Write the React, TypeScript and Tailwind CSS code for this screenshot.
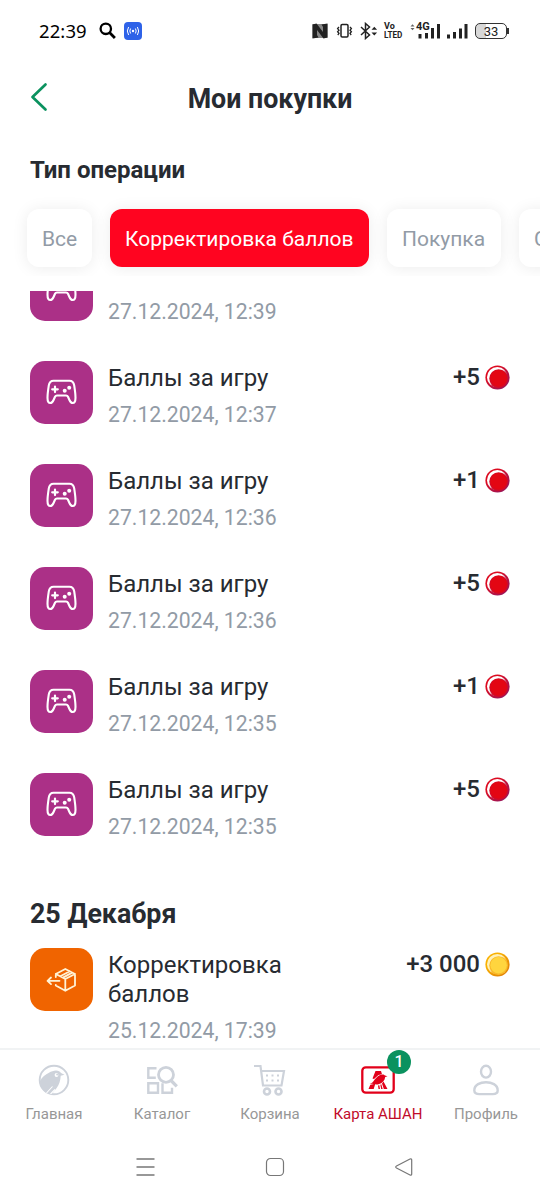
import type { ReactNode } from "react";

const chips = [
  { label: "Все", width: "w-[65px]", active: false },
  { label: "Корректировка баллов", width: "w-[259px]", active: true },
  { label: "Покупка", width: "w-[114px]", active: false },
  { label: "Списание", width: "w-[124px]", active: false },
];

const games = [
  { id: 1, date: "27.12.2024, 12:39", points: "+1" },
  { id: 2, date: "27.12.2024, 12:37", points: "+5" },
  { id: 3, date: "27.12.2024, 12:36", points: "+1" },
  { id: 4, date: "27.12.2024, 12:36", points: "+5" },
  { id: 5, date: "27.12.2024, 12:35", points: "+1" },
  { id: 6, date: "27.12.2024, 12:35", points: "+5" },
];

function StatusBar() {
  return (
    <div className="flex h-[62px] items-center pl-[39px] pr-[31px] text-black">
      <span className="w-[60px] font-['Noto_Sans'] text-[18.5px] tracking-[0.1px]">22:39</span>
      <svg className="-mt-px" width="17" height="17" viewBox="0 0 17 17" fill="none" stroke="currentColor" strokeWidth="2.3">
        <circle cx="6.8" cy="6.8" r="5.2" />
        <path d="M10.5 10.5l5.4 5.4" strokeWidth="2.8" />
      </svg>
      <div className="ml-2 flex h-[18px] w-[18px] items-center justify-center rounded-[4px] bg-[#2e62e8]">
        <svg width="14" height="10" viewBox="0 0 14 10" fill="none" stroke="white" strokeWidth="1">
          <circle cx="7" cy="5" r="1.2" fill="white" stroke="none" />
          <path d="M4.6 2.5q-1.6 2.5 0 5M9.4 2.5q1.6 2.5 0 5M2.6 1q-2.6 4 0 8M11.4 1q2.6 4 0 8" />
        </svg>
      </div>

      <div className="ml-auto flex h-[18px] items-center text-[#222]">
        {/* NFC */}
        <svg width="16" height="16" viewBox="0 0 16 16">
          <path d="M0.5 1.5l4-1L11 9V4L9.500 1.500l6-1v14l-4 1L5 7v5l1.500 2.500-6 1z" fill="currentColor" />
          <path d="M0.5 1h15v14h-15z" fill="currentColor" opacity="0.550" />
        </svg>
        {/* Vibration */}
        <svg className="ml-2" width="17" height="16" viewBox="0 0 17 16" fill="none" stroke="currentColor" strokeWidth="1.5">
          <rect x="5" y="1.5" width="7" height="12.5" rx="1.2" />
          <path d="M3 4L1.6 5.6 3 7.2 1.6 8.8 3 10.4 1.8 12M14 4l1.4 1.6L14 7.2l1.4 1.6L14 10.4l1.2 1.6" strokeWidth="1.3" />
        </svg>
        {/* Bluetooth */}
        <svg className="ml-[7px]" width="18" height="18" viewBox="0 0 18 18" fill="none" stroke="currentColor" strokeWidth="1.5">
          <path d="M1 5l8.5 8-4 3.5v-15l4 3.5L1 13" />
          <path d="M11.500 7.800L14.300 4.800l2.800 3zM11.500 10.500l2.800 3 2.800-3z" fill="currentColor" stroke="none" />
        </svg>
        <div className="ml-[6px] w-[22px] font-[Roboto] text-[9px] font-bold leading-[9px]">
          <div>Vo</div>
          <div className="origin-left scale-x-[0.900] whitespace-nowrap">LTED</div>
        </div>
        <div className="relative ml-[4px] h-[18px] w-[32px]">
          <svg width="32" height="18" viewBox="0 0 32 18" fill="currentColor">
            <path d="M0.500 4.500l2-2.200 2 2.200zM0.500 6l2 2.200 2-2.200z" opacity="0.700" />
            <path d="M8.500 12h3v4.500h-3zM15 11h3v5.500h-3zM21 6h3v10.500h-3zM27 2h3v14.500h-3z" />
          </svg>
          <span className="absolute left-[6px] top-0 font-[Roboto] text-[11px] font-bold leading-[10px]">4G</span>
        </div>
        <svg className="ml-[4px]" width="23" height="18" viewBox="0 0 23 18" fill="currentColor">
          <path d="M1 12.500h3v4H1zM7 10h3v6.500H7zM13 6.500h3v10h-3zM18.500 2h3v14.500h-3z" />
        </svg>
        <div className="ml-[6px] flex h-[16px] w-[32px] items-center justify-center rounded-[5px] border border-[#333] bg-[linear-gradient(90deg,#d8d8d8_33%,white_33%)] font-[Roboto] text-[13px] leading-none">
          33
        </div>
        <div className="h-[6px] w-[2px] bg-[#333]" />
      </div>
    </div>
  );
}

function GamepadIcon() {
  return (
    <svg width="31" height="26" viewBox="0 0 31 26" fill="none" stroke="white" strokeWidth="2.100" strokeLinejoin="round" strokeLinecap="round">
      <path d="M7.500 1.700h16c3.200 0 4.300 2 4.700 4.700.7 4.500 1.300 8.500 1.300 12.300 0 3.200-1.200 5.300-2.800 5.300-1.500 0-2.600-1.500-3.400-3.300l-1.300-2.900c-.4-.9-1-1.300-2-1.300h-9c-1 0-1.600.4-2 1.300l-1.300 2.900C6.900 22.500 5.800 24 4.300 24c-1.600 0-2.800-2.100-2.800-5.300 0-3.800.6-7.800 1.300-12.300.4-2.700 1.500-4.700 4.700-4.700z" />
      <path d="M9 7.500v5.600M6.200 10.300h5.600" strokeWidth="2.200" />
      <g fill="white" stroke="none">
        <circle cx="18.700" cy="11.700" r="2" />
        <circle cx="23.200" cy="8.700" r="2" />
      </g>
    </svg>
  );
}

function BoxIcon() {
  return (
    <svg width="31" height="26" viewBox="0 0 31 26" fill="none" stroke="#fff3d6" strokeWidth="1.800" strokeLinejoin="round" strokeLinecap="round">
      <path d="M9.800 10V7L19.300 2 29 7v11.500l-9.700 5.300-9.500-5.300v-.7M9.800 7l9.500 5L29 7M19.300 12v11.500M14.300 9.300l9.500-5M17 10.600l9.200-5" />
      <path d="M5 10.500L1.500 13.800 5 17.100M2 13.800h11.500" />
    </svg>
  );
}

function Coin({ gold = false }: { gold?: boolean }) {
  const id = gold ? "coin-gold" : "coin-red";
  const ring = `${id}-ring`;
  return (
    <svg width="25" height="25" viewBox="0 0 25 25">
      <defs>
        <linearGradient id={id} x1="0" y1="0" x2="1" y2="1">
          <stop offset="0.3" stopColor={gold ? "#f9b000" : "#dc0a20"} />
          <stop offset="0.95" stopColor={gold ? "#dc7a08" : "#8d1a66"} />
        </linearGradient>
        <linearGradient id={ring} x1="0" y1="0" x2="1" y2="1">
          <stop offset="0.420" stopColor={gold ? "#fff1b8" : "#fff"} />
          <stop offset="0.680" stopColor={gold ? "#f6a81c" : "#c4143c"} />
        </linearGradient>
      </defs>
      <circle cx="12.500" cy="12.500" r="12.100" fill={`url(#${id})`} />
      <circle cx="12.300" cy="12.300" r="10.300" fill={`url(#${ring})`} />
      <circle cx="13.600" cy="13.600" r="9.300" fill={gold ? "#f9b92a" : "#d40a25"} />
      <circle cx="13.600" cy="13.300" r="8.200" fill={gold ? "#ffd53e" : "#e30613"} />
    </svg>
  );
}

type RowProps = {
  icon: ReactNode;
  color: string;
  title: ReactNode;
  date: string;
  points: string;
  gold?: boolean;
};

function Row({ icon, color, title, date, points, gold }: RowProps) {
  return (
    <div className="flex min-h-[103px] items-start px-[30px]">
      <div className={`flex h-[63px] w-[63px] shrink-0 items-center justify-center rounded-[15px] ${color}`}>
        {icon}
      </div>
      <div className="ml-[15px] pt-[3px]">
        <div className="text-[24px] leading-[29px] text-[#272b31]">{title}</div>
        <div className="mt-[7px] text-[21.200px] leading-[29px] text-[#929ba6]">{date}</div>
      </div>
      <div className="ml-auto flex items-center gap-[5px] pt-[4px]">
        <span className="text-[24px] font-medium leading-[25px] text-[#272b31]">{points}</span>
        <Coin gold={gold} />
      </div>
    </div>
  );
}

function HomeIcon() {
  return (
    <svg width="32" height="32" viewBox="0 0 32 32">
      <circle cx="16" cy="16" r="14.300" fill="none" stroke="#cdd2da" strokeWidth="1.900" />
      <path d="M2 17c2-4 5.500-6.500 9-8.300 2.200-1.200 4.500-2.200 7-2.200 2.500 0 4 1.300 5 2.500l3.500 1.700-3.800 1c-.2 5-1.500 9-4.200 12.500L13.500 30.500C6 29 2 24 2 17z" fill="#cdd2da" />
      <path d="M14.500 22.500L8.500 29M17 25.500L12.500 30" stroke="white" strokeWidth="1.100" />
      <circle cx="18.500" cy="11" r="1.900" fill="white" />
      <circle cx="19.200" cy="10.500" r="1" fill="#cdd2da" />
    </svg>
  );
}

function CatalogIcon() {
  return (
    <svg width="32" height="30" viewBox="0 0 32 30" fill="none" stroke="#cdd2da" strokeWidth="2.400">
      <path d="M10.500 3.300H2.300v9.500h7.500M2.300 18.300h9.700v9.500H2.300zM16.500 18.300v9.500h9.500v-5" />
      <circle cx="20" cy="9.800" r="7.500" strokeWidth="2.800" />
      <path d="M25 15.500l5.800 5.800" strokeWidth="3.200" />
    </svg>
  );
}

function CartIcon() {
  return (
    <svg width="32" height="32" viewBox="0 0 32 32" fill="none" stroke="#cdd2da" strokeWidth="2.200">
      <path d="M0 2h6.500l2.500 19.500h18.500L30 7H7" />
      <circle cx="13" cy="27.500" r="3" strokeWidth="2.600" />
      <circle cx="24.500" cy="27.500" r="3" strokeWidth="2.600" />
      <path d="M12 11.500h2M17.500 11.500h2M23 11.500h2M12 16.500h2M17.500 16.500h2M23 16.500h2" />
    </svg>
  );
}

function CardIcon() {
  return (
    <svg width="34" height="28" viewBox="0 0 34 28">
      <rect x="1.300" y="1.300" width="31.400" height="25.400" rx="3.500" fill="white" stroke="#e2001a" strokeWidth="2.300" />
      <g fill="#e2001a">
        <path d="M14.500 5h5.500l1 3.200-3.500.8-4.500 4-1.500-.5zM7.500 23l1.800-4.200 5-1-1.600 5.200z" />
        <path d="M8.500 17.800c2.500-.5 3.500-1.800 5-4 2-2.800 4.500-5.200 8-5.400 1.200 0 2 .5 2.500 1.100l2.500.7-2.300.9c-.4 3.400-2.700 6.200-6.700 7.200-3.200.7-5.500-.8-9-.5z" />
        <path d="M22.500 15.500l4 7.500h-3.700l-1.800-5.500zM17 19.500l1.300-.3.700 3.800h-1.500zM19.300 18.700l1-.4 1.400 4.700h-1.500z" />
      </g>
    </svg>
  );
}

function ProfileIcon() {
  return (
    <svg width="28" height="32" viewBox="0 0 28 32" fill="none" stroke="#cdd2da" strokeWidth="2.400">
      <ellipse cx="14" cy="7.700" rx="5" ry="5.900" />
      <path d="M14 18.300c5.500 0 11.700 2.200 11.700 8.200 0 2.700-2 3.600-5 3.600H7.300c-3 0-5-.9-5-3.600 0-6 6.200-8.200 11.700-8.200z" />
    </svg>
  );
}

const tabs = [
  { label: "Главная", icon: <HomeIcon /> },
  { label: "Каталог", icon: <CatalogIcon /> },
  { label: "Корзина", icon: <CartIcon /> },
  { label: "Карта АШАН", icon: <CardIcon />, active: true, badge: 1 },
  { label: "Профиль", icon: <ProfileIcon /> },
];

export default function App() {
  return (
    <div className="flex h-[1200px] w-[540px] flex-col overflow-hidden bg-white font-[Roboto,'Noto_Sans',sans-serif]">
      <StatusBar />

      {/* Header */}
      <header className="grid h-[74px] grid-cols-[60px_1fr_60px] items-center">
        <svg className="ml-[30px] -mt-1" width="18" height="30" viewBox="0 0 18 30" fill="none" stroke="#0b925f" strokeWidth="2.700" strokeLinecap="round" strokeLinejoin="round">
          <path d="M15.500 2.500L2.500 15l13 12.500" />
        </svg>
        <h1 className="text-center text-[26.800px] font-bold text-[#272b31]">Мои покупки</h1>
      </header>

      <h2 className="h-[55px] pl-[30px] pt-5 text-[24px] font-bold leading-[28px] text-[#272b31]">Тип операции</h2>

      {/* Filters */}
      <div className="flex h-[85px] shrink-0 gap-[18px] overflow-hidden pl-[27px] pt-[18px]">
        {chips.map((chip) => (
          <button
            key={chip.label}
            className={`flex h-[58px] shrink-0 items-center whitespace-nowrap rounded-[12px] pl-[15px] pt-[4px] text-[21px] shadow-[0_1px_16px_rgba(0,0,0,0.08)] ${chip.width} ${
              chip.active ? "bg-[#ff0420] text-white" : "bg-white text-[#929ba6]"
            }`}
          >
            {chip.label}
          </button>
        ))}
      </div>

      {/* History */}
      <main className="mt-[15px] h-[757px] shrink-0 overflow-hidden">
        <div className="-mt-[33.5px]">
          {games.map((game) => (
            <Row key={game.id} icon={<GamepadIcon />} color="bg-[#ab3087]" title="Баллы за игру" date={game.date} points={game.points} />
          ))}
        </div>
        <h3 className="mt-[21px] mb-[17.5px] pl-[30px] text-[26.800px] font-bold leading-[34px] text-[#272b31]">25 Декабря</h3>
        <Row
          icon={<BoxIcon />}
          color="bg-[#f06400]"
          title={<>Корректировка<br />баллов</>}
          date="25.12.2024, 17:39"
          points="+3 000"
          gold
        />
      </main>

      {/* Tab bar */}
      <nav className="grid h-[85px] shrink-0 grid-cols-5 border-t-2 border-[#f1f3f4]">
        {tabs.map((tab) => (
          <div key={tab.label} className="flex flex-col items-center pt-[13px]">
            <div className="relative flex h-[34px] items-center">
              {tab.icon}
              {tab.badge && (
                <span className="absolute -right-[16px] -top-[13px] flex h-6 w-6 items-center justify-center rounded-full bg-[#0b925f] text-[16px] font-medium text-white">
                  {tab.badge}
                </span>
              )}
            </div>
            <span className={`mt-[7px] whitespace-nowrap text-[15px] leading-[20px] ${tab.active ? "text-[#c10b2a]" : "text-[#979797]"}`}>
              {tab.label}
            </span>
          </div>
        ))}
      </nav>

      {/* System navigation */}
      <div className="flex h-[67px] shrink-0 items-center justify-between pl-[136px] pr-[127px]">
        <svg width="19" height="20" viewBox="0 0 19 20" stroke="#777" strokeWidth="1.300">
          <path d="M0.500 2h18M0.500 10h18M0.500 18h18" />
        </svg>
        <svg width="20" height="20" viewBox="0 0 20 20" fill="none" stroke="#777" strokeWidth="1.200">
          <rect x="1.500" y="1.500" width="17" height="17" rx="4" />
        </svg>
        <svg width="19" height="20" viewBox="0 0 19 20" fill="none" stroke="#777" strokeWidth="1.200">
          <path d="M16 2L2.500 9q-1.600 1 0 2L16 18q1.700.6 1.700-1V3q0-1.600-1.700-1z" />
        </svg>
      </div>
    </div>
  );
}
